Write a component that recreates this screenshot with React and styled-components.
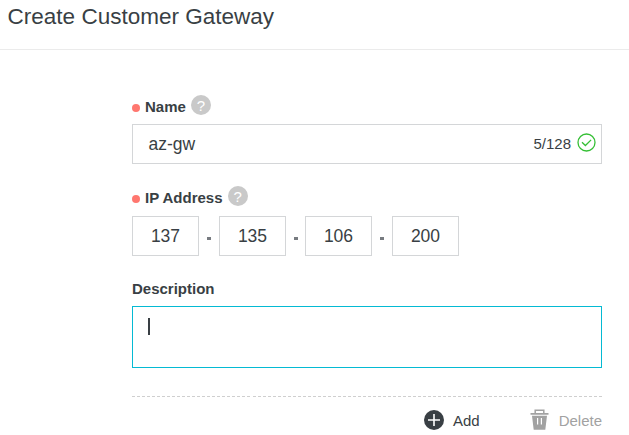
import React from "react";
import styled, { createGlobalStyle } from "styled-components";

const GlobalStyle = createGlobalStyle`
  * { box-sizing: border-box; }
  body {
    margin: 0;
    background: #fff;
    color: #393f44;
    font-family: "Liberation Sans", Arial, sans-serif;
    overflow: hidden;
  }
`;

const Page = styled.main`
  width: 629px;
  height: 435px;
`;

const Header = styled.header`
  height: 50px;
  padding: 4px 0 0 7.6px;
  border-bottom: 1px solid #ebebeb;
`;

const Title = styled.h1`
  margin: 0;
  font-size: 22.5px;
  line-height: 26px;
  font-weight: 400;
`;

const Form = styled.form`
  width: 470px;
  margin: 43px 0 0 132px;
`;

const Field = styled.div`
  display: flex;
  flex-direction: column;
  margin-bottom: ${(p) => p.$gap}px;
`;

const LabelRow = styled.div`
  display: flex;
  align-items: center;
  height: ${(p) => p.$height}px;
  padding-bottom: ${(p) => p.$lift}px;
`;

const RequiredDot = styled.span`
  width: 8px;
  height: 8px;
  margin: 6px 5px 0 0;
  border-radius: 50%;
  background: #ff776f;
`;

const Label = styled.label`
  padding-top: 4px;
  font-size: 15px;
  line-height: 18px;
  font-weight: 700;
`;

const Help = styled.span`
  width: 20px;
  height: 20px;
  margin-left: 5px;
  border-radius: 50%;
  background: #c9c9c9;
  color: #fff;
  font-size: 15px;
  line-height: 21px;
  text-align: center;
`;

const InputBox = styled.div`
  display: flex;
  align-items: center;
  height: 40px;
  padding: 0 5px 0 15.5px;
  border: 1px solid #d4d6d8;
  font-size: 17.5px;
`;

const Counter = styled.span`
  margin: 0 6px 2px auto;
  font-size: 15px;
`;

const ValidIcon = styled.svg`
  margin-bottom: 3px;
`;

const AddressRow = styled.div`
  display: grid;
  grid-template-columns: 67px 20px 67px 19px 67px 20px 67px;
`;

const Octet = styled.div`
  height: 40px;
  border: 1px solid #d4d6d8;
  font-size: 17.5px;
  line-height: 38px;
  text-align: center;
`;

const Separator = styled.span`
  width: 4px;
  height: 3px;
  margin: 21px 0 0 8px;
  background: #777b80;
`;

const TextArea = styled.div`
  height: 62px;
  padding: 11px 15px;
  border: 1px solid #05bad3;
`;

const Caret = styled.div`
  width: 2px;
  height: 17px;
  background: #393f44;
`;

const Divider = styled.svg`
  display: block;
  width: 470px;
  height: 1px;
`;

const Actions = styled.div`
  display: flex;
  align-items: center;
  justify-content: flex-end;
  height: 45px;
`;

const Action = styled.button`
  display: flex;
  align-items: center;
  gap: ${(p) => (p.disabled ? 10 : 9)}px;
  margin-left: ${(p) => (p.disabled ? 50 : 0)}px;
  padding: 0;
  border: 0;
  background: none;
  color: ${(p) => (p.disabled ? "#a2a2a2" : "#393f44")};
  font: 15px "Liberation Sans", Arial, sans-serif;
  line-height: 20px;
`;

const ActionText = styled.span`
  padding-top: 2px;
`;

const octets = ["137", "135", "106", "200"];

export default function App() {
  return (
    <>
      <GlobalStyle />
      <Page>
        <Header>
          <Title>Create Customer Gateway</Title>
        </Header>
        <Form>
          <Field $gap={21}>
            <LabelRow $height={31} $lift={8}>
              <RequiredDot />
              <Label>Name</Label>
              <Help>?</Help>
            </LabelRow>
            <InputBox>
              az-gw
              <Counter>5/128</Counter>
              <ValidIcon width="19" height="19" viewBox="0 0 19 19" fill="none" stroke="#35bf35" strokeWidth="1.3">
                <circle cx="9.5" cy="9.5" r="8.5" />
                <path d="M5 9.2 8.4 12.5 14.1 6.9" />
              </ValidIcon>
            </InputBox>
          </Field>
          <Field $gap={20}>
            <LabelRow $height={31} $lift={10}>
              <RequiredDot />
              <Label>IP Address</Label>
              <Help>?</Help>
            </LabelRow>
            <AddressRow>
              {octets.map((octet, i) => (
                <React.Fragment key={octet}>
                  {i > 0 && <Separator />}
                  <Octet>{octet}</Octet>
                </React.Fragment>
              ))}
            </AddressRow>
          </Field>
          <Field $gap={28}>
            <LabelRow $height={30} $lift={8}>
              <Label>Description</Label>
            </LabelRow>
            <TextArea>
              <Caret />
            </TextArea>
          </Field>
          <Divider>
            <line x1="0" y1=".5" x2="470" y2=".5" stroke="#cfcfcf" strokeDasharray="3 2.0215" shapeRendering="crispEdges" />
          </Divider>
          <Actions>
            <Action type="button">
              <svg width="20" height="20" viewBox="0 0 20 20">
                <circle cx="10" cy="10" r="10" fill="#393f44" />
                <path d="M10 4v12M4 10h12" stroke="#fff" strokeWidth="1.6" />
              </svg>
              <ActionText>Add</ActionText>
            </Action>
            <Action type="button" disabled>
              <svg width="19" height="21" viewBox="0 0 19 21">
                <path d="M5.2 4V1.3h8.6V4" fill="none" stroke="#a2a2a2" strokeWidth="1.5" />
                <path d="M.5 4h18v1.7H.5zM2 6.7h15l-1.7 14H3.7z" fill="#a2a2a2" />
                <path d="M7.6 9v6.5M11.4 9v6.5" stroke="#fff" strokeWidth="1.2" />
              </svg>
              <ActionText>Delete</ActionText>
            </Action>
          </Actions>
        </Form>
      </Page>
    </>
  );
}
